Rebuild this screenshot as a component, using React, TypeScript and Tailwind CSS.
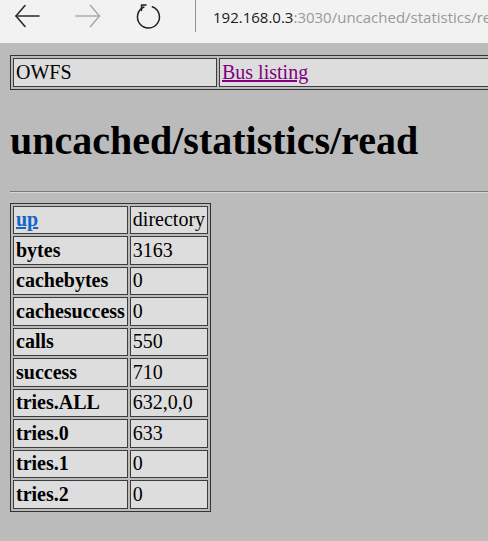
const stats: [string, string][] = [
  ["bytes", "3163"],
  ["cachebytes", "0"],
  ["cachesuccess", "0"],
  ["calls", "550"],
  ["success", "710"],
  ["tries.ALL", "632,0,0"],
  ["tries.0", "633"],
  ["tries.1", "0"],
  ["tries.2", "0"],
];

const cell =
  "border border-[#3c3c3c] bg-[#dddddd] h-[28.5px] px-[2px] py-0 leading-[23px] text-left align-middle whitespace-nowrap";

function Toolbar() {
  return (
    <div className="flex h-[43px] items-start bg-[#f2f2f2] font-['Open_Sans',sans-serif]">
      <svg width="195" height="43" viewBox="0 0 195 43" fill="none" className="shrink-0">
        {/* back */}
        <g stroke="#2b2b2b" strokeWidth="1.6" strokeLinecap="round" strokeLinejoin="round">
          <path d="M16 16 H39" />
          <path d="M25 5.5 L16 16 L25 26.5" />
        </g>
        {/* forward (disabled) */}
        <g stroke="#ababab" strokeWidth="1.6" strokeLinecap="round" strokeLinejoin="round">
          <path d="M76 16 H99.5" />
          <path d="M90.5 5.5 L99.5 16 L90.5 26.5" />
        </g>
        {/* refresh */}
        <g stroke="#1f1f1f" strokeWidth="1.5" strokeLinecap="round" strokeLinejoin="round">
          <path d="M143.9 7 A11 11 0 1 0 152.3 6.7" />
          <path d="M146 5 H141.5 V10.5" />
        </g>
      </svg>
      <div className="h-[32px] w-px shrink-0 bg-[#8f8f8f]" />
      <div className="ml-[17px] mt-[6px] whitespace-nowrap text-[15px] leading-[22px]">
        <span className="text-[#1a1a1a]">192.168.0.3</span>
        <span className="text-[#999999]">:3030/uncached/statistics/read</span>
      </div>
    </div>
  );
}

export default function App() {
  return (
    <div className="h-[541px] w-[488px] overflow-hidden bg-[#bbbbbb]">
      <Toolbar />
      <div className="w-[760px] pl-[10px] pt-[12px] font-['Liberation_Serif','Times_New_Roman',serif] text-[20px] text-black">
        <table className="w-[750px] border-separate border-spacing-[2px] border border-[#333333]">
          <tbody>
            <tr>
              <td className={`${cell} w-[204px]`}>OWFS</td>
              <td className={cell}>
                <a href="#" className="text-[#800080] underline">
                  Bus listing
                </a>
              </td>
            </tr>
          </tbody>
        </table>

        <h1 className="mt-[28px] mb-[27px] text-[40px] font-bold leading-[46px]">
          uncached/statistics/read
        </h1>

        <hr className="mb-[10px] h-0 border-0 border-t border-b border-t-[#7a7a7a] border-b-[#d6d6d6]" />

        <table className="border-separate border-spacing-[2px] border border-[#333333]">
          <tbody>
            <tr>
              <td className={`${cell} font-bold`}>
                <a href="#" className="text-[#1565c8] underline">
                  up
                </a>
              </td>
              <td className={cell}>directory</td>
            </tr>
            {stats.map(([k, v]) => (
              <tr key={k}>
                <td className={`${cell} font-bold`}>{k}</td>
                <td className={cell}>{v}</td>
              </tr>
            ))}
          </tbody>
        </table>
      </div>
    </div>
  );
}
